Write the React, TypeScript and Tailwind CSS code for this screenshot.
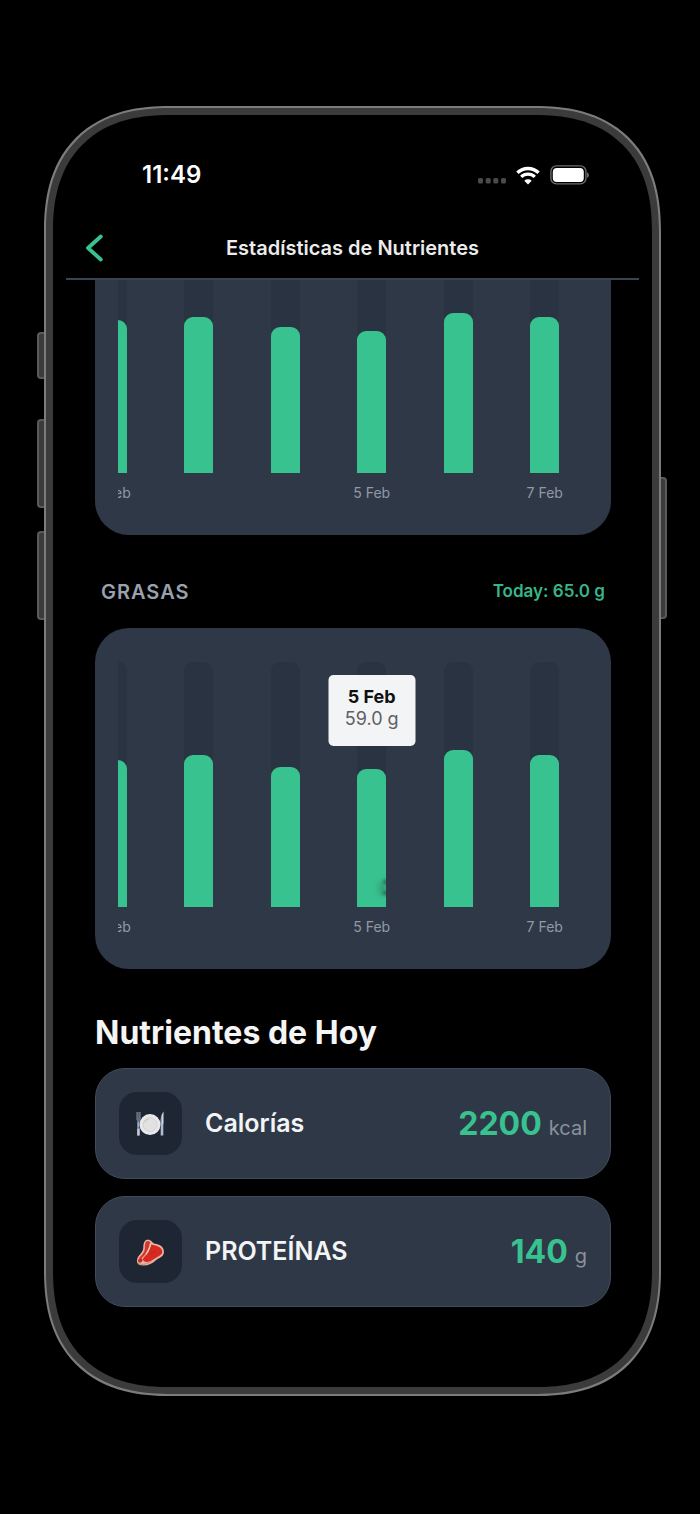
import { clsx } from "clsx";
import type { ReactNode } from "react";

type Day = { label: string; value: number; showLabel?: boolean };

const MAX_HEIGHT = 245;

const CARBS: Day[] = [
  { label: "2 Feb", value: 153, showLabel: true },
  { label: "3 Feb", value: 156 },
  { label: "4 Feb", value: 146 },
  { label: "5 Feb", value: 142, showLabel: true },
  { label: "6 Feb", value: 160 },
  { label: "7 Feb", value: 156, showLabel: true },
];

const FATS: Day[] = [
  { label: "2 Feb", value: 147, showLabel: true },
  { label: "3 Feb", value: 152 },
  { label: "4 Feb", value: 140 },
  { label: "5 Feb", value: 138, showLabel: true },
  { label: "6 Feb", value: 157 },
  { label: "7 Feb", value: 152, showLabel: true },
];

const WifiIcon = () => (
  <svg viewBox="0 0 24 19" className="h-[19px] w-6" fill="none" stroke="#fff">
    <path d="M1.4 6.8a15.2 15.2 0 0 1 21.2 0" strokeWidth="3.4" />
    <path d="M5.2 10.9a9.8 9.8 0 0 1 13.6 0" strokeWidth="3.2" />
    <path
      d="M12 18.6 8.3 14.7a5.4 5.4 0 0 1 7.4 0z"
      fill="#fff"
      stroke="none"
    />
  </svg>
);

const BatteryIcon = () => (
  <svg viewBox="0 0 40 20" className="h-5 w-10">
    <rect
      x="0.9"
      y="0.9"
      width="35"
      height="18"
      rx="5.5"
      fill="none"
      stroke="#6b6b6b"
      strokeWidth="1.4"
    />
    <rect x="2.8" y="2.9" width="31" height="14" rx="4" fill="#fff" />
    <path d="M37 7.2c2.6.9 2.6 4.7 0 5.6z" fill="#6b6b6b" />
  </svg>
);

const PlateIcon = () => (
  <svg viewBox="1 0 30 26" className="h-[26px] w-[30px]">
    <path
      d="M1.2 1v6.5c0 1.4.8 2.3 1.3 2.6L2 24.5h3L4.5 10.1c.6-.3 1.3-1.2 1.3-2.6V1"
      fill="#66717f"
    />
    <path d="M1.5 1v6M3.5 1v6M5.5 1v6" stroke="#4b5563" strokeWidth="0.7" />
    <path d="M3.2 10.5v6" stroke="#8eb0d4" strokeWidth="1.6" />
    <path d="M3.4 17.500v7" stroke="#c3ccd6" strokeWidth="2.4" />
    <path d="M28.7 0.500c-2.200 1.600-3.300 6.500-3.300 12.500h3.300z" fill="#9cadbf" />
    <path d="M27.500 3v10" stroke="#c5d4e4" strokeWidth="1" />
    <path d="M27 13v11.500" stroke="#aebccb" strokeWidth="2.6" />
    <circle cx="15" cy="13.6" r="10.5" fill="#e9e9e9" />
    <circle cx="15" cy="13.6" r="7" fill="#e2e2e2" stroke="#cfcfcf" strokeWidth="0.8" />
    <path d="M9.500 11.500a6 6 0 0 1 4-3.600" stroke="#c2c2c2" strokeWidth="1" fill="none" />
  </svg>
);

const SteakIcon = () => (
  <svg viewBox="1 -1 28 28" className="h-7 w-7">
    <path
      d="M9 2C10 .2 14 .3 15.800 2.500c1.200 1.600 2.200 2 4.700 2.600C25 6 28.300 9 27.900 13.500c-.5 4.500-4.500 4.800-8 7.800-3.500 3.200-7.400 5.300-12.400 5.300C3 26.600.5 24.800 1 21c.4-2.800 1.600-3.900 3.300-6C6.500 12.500 7.300 11 7.300 8.500 7.300 5.500 7.800 3.800 9 2z"
      fill="#e9b4a7"
    />
    <path
      d="M9.800 3C10.800 1.500 13 1.700 14.200 3.500c.6 1 .3 2-.4 3.500l-3.300 7-5 5.500c-1.300 1.500-2.500 1.300-2.400.2.200-1.500 1.700-2.700 3.200-4.400C8.300 13 8.800 11 8.800 8.500c0-2.200.2-4 1-5.500z"
      fill="#d6372b"
    />
    <path
      d="M16 5.500c2.800 1 10 2 10.300 7 .2 3.500-3.500 4.300-7 6.800-3 2.200-6.300 4.200-9.800 3.400-2.600-.6-3.200-2.700-1.600-4.500 2-2.200 3.800-4 5-6.500 1-2.200 1.500-6.500 3.100-6.200z"
      fill="#d62a20"
    />
    <path d="M2.600 20.300c1.900-1.300 4.200-.8 4 1-.2 1.900-2.300 2.600-3.600 2.200-1-.3-1.400-2.300-.4-3.200z" fill="#c9281f" />
    <path d="M14.300 4.500c.3 2.800-1.800 7-4.300 11" stroke="#f3cfc5" strokeWidth="1.300" fill="none" />
    <path d="M14.500 14.500c2.500 0 4.500-1.500 5-3.500" stroke="#b9211a" strokeWidth="0.800" fill="none" />
    <path d="M1.800 24.300c4.200 2.200 9.700.8 13.700-2.200" stroke="#c98173" strokeWidth="0.900" fill="none" />
  </svg>
);

const StatusBar = () => (
  <div className="flex h-[102px] items-center justify-between pt-[18px] pr-[62px] pl-[89px]">
    <time className="text-2xl font-semibold text-white">11:49</time>
    <div className="flex items-center gap-[10px]">
      <svg viewBox="0 0 28 19" className="h-[19px] w-7" fill="#4a4a4a">
        <rect x="0" y="12" width="5" height="5.5" rx="1.6" />
        <rect x="7.7" y="12" width="5" height="5.5" rx="1.6" />
        <rect x="15.3" y="12" width="5" height="5.5" rx="1.6" />
        <rect x="23" y="12" width="5" height="5.5" rx="1.6" />
      </svg>
      <WifiIcon />
      <BatteryIcon />
    </div>
  </div>
);

const Header = () => (
  <header className="mx-[13px] grid h-[63px] grid-cols-[1fr_auto_1fr] items-center border-b-2 border-[#3b4350] px-5">
    <button type="button" aria-label="Volver" className="cursor-pointer justify-self-start">
      <svg viewBox="0 0 17 28" className="h-7 w-[17px]">
        <path
          d="M14.800 2.500 2 14 14.800 25.500"
          fill="none"
          stroke="#38c28f"
          strokeWidth="3.8"
          strokeLinecap="round"
          strokeLinejoin="round"
        />
      </svg>
    </button>
    <h1 className="text-xl font-semibold text-[#ececec]">Estadísticas de Nutrientes</h1>
  </header>
);

const Tooltip = ({ title, text }: { title: string; text: string }) => (
  <div className="absolute top-[13px] left-1/2 z-10 flex h-[71px] w-[87px] -translate-x-1/2 flex-col items-center rounded-[5px] bg-gray-100 pt-[11px] text-lg leading-[22px] whitespace-nowrap">
    <strong className="font-bold text-[#111]">{title}</strong>
    <span className="text-[#5f6063]">{text}</span>
  </div>
);

// fading touch mark left on the selected bar
const TouchMark = () => (
  <svg viewBox="0 0 18 30" className="absolute right-0 bottom-1 h-[30px] w-[18px]">
    <defs>
      <radialGradient id="touch">
        <stop offset="0" stopColor="#26604f" stopOpacity="0.9" />
        <stop offset="1" stopColor="#2c9a73" stopOpacity="0" />
      </radialGradient>
    </defs>
    <ellipse cx="15" cy="15" rx="10" ry="13" fill="url(#touch)" opacity="0.4" />
    <ellipse cx="18" cy="9" rx="6" ry="5" fill="url(#touch)" />
    <ellipse cx="18" cy="20" rx="7" ry="5" fill="url(#touch)" />
  </svg>
);

type BarChartProps = {
  days: Day[];
  selected?: string;
  selectedText?: string;
  className?: string;
};

const BarChart = ({ days, selected, selectedText, className }: BarChartProps) => (
  <div className={clsx("rounded-[34px] bg-[#2f3847] px-[23px] pt-[34px] pb-8", className)}>
    <div className="flex justify-end overflow-hidden">
      <div className="grid w-[519px] shrink-0 grid-cols-6">
        {days.map((day) => (
          <div key={day.label} className="relative flex flex-col items-center">
            <div className="flex h-[245px] w-[29px] items-end rounded-t-[9px] bg-[#2a3342]">
              <div
                className="relative w-full overflow-hidden rounded-t-[9px] bg-[#38c28f]"
                style={{ height: `${(day.value / MAX_HEIGHT) * 100}%` }}
              >
                {day.label === selected && <TouchMark />}
              </div>
            </div>
            {day.label === selected && selectedText && (
              <Tooltip title={day.label} text={selectedText} />
            )}
            <span className="mt-[10px] h-5 text-sm text-[#9299a5]">
              {day.showLabel && day.label}
            </span>
          </div>
        ))}
      </div>
    </div>
  </div>
);

type NutrientCardProps = {
  icon: ReactNode;
  name: string;
  value: number;
  unit: string;
};

const NutrientCard = ({ icon, name, value, unit }: NutrientCardProps) => (
  <li className="flex h-[111px] items-center rounded-[30px] border border-[#424b5a] bg-[#2f3847] px-[23px]">
    <div className="flex size-[63px] items-center justify-center rounded-[18px] bg-[#1e2634]">
      {icon}
    </div>
    <span className="ml-[23px] text-[25px] font-semibold text-gray-100">{name}</span>
    <p className="ml-auto flex items-baseline gap-[7px]">
      <span className="text-[32px] font-bold text-[#38c28f]">{value}</span>
      <span className="text-xl text-[#8b919c]">{unit}</span>
    </p>
  </li>
);

const SideButton = ({ className }: { className: string }) => (
  <div className={clsx("absolute border-2 border-[#5a5a5a] bg-[#3b3b3b]", className)} />
);

const App = () => {
  return (
    <main className="min-h-screen bg-black pt-[106px] pr-[39px] pb-[118px] pl-11 font-['Inter',sans-serif]">
      <div className="relative">
        <SideButton className="top-[226px] -left-[7px] h-[47px] w-[9px] rounded-l-sm" />
        <SideButton className="top-[313px] -left-[7px] h-[89px] w-[9px] rounded-l-sm" />
        <SideButton className="top-[425px] -left-[7px] h-[89px] w-[9px] rounded-l-sm" />
        <SideButton className="top-[371px] -right-[6px] h-[142px] w-[9px] rounded-r-sm" />
        <div className="relative rounded-[126px] border-2 border-[#7c7c7c] bg-[#3b3b3b] p-[7px] [corner-shape:superellipse(1.25)]">
          <div className="overflow-hidden rounded-[117px] bg-black [corner-shape:superellipse(1.25)]">
            <StatusBar />
            <Header />
            <div className="overflow-hidden pr-[41px] pb-20 pl-[42px]">
              <BarChart days={CARBS} className="-mt-[86px]" />

              <section>
                <div className="flex h-[93px] items-center justify-between px-[6px] pt-[21px]">
                  <h2 className="text-xl font-semibold tracking-wider text-gray-400">GRASAS</h2>
                  <p className="text-[17px] font-semibold text-[#38b588]">Today: 65.0 g</p>
                </div>
                <BarChart days={FATS} selected="5 Feb" selectedText="59.0 g" />
              </section>

              <section>
                <h2 className="flex h-[99px] items-center pt-[29px] text-[32px] font-bold text-[#f5f5f5]">
                  Nutrientes de Hoy
                </h2>
                <ul className="flex flex-col gap-[17px]">
                  <NutrientCard icon={<PlateIcon />} name="Calorías" value={2200} unit="kcal" />
                  <NutrientCard icon={<SteakIcon />} name="PROTEÍNAS" value={140} unit="g" />
                </ul>
              </section>
            </div>
          </div>
        </div>
      </div>
    </main>
  );
};

export default App;
